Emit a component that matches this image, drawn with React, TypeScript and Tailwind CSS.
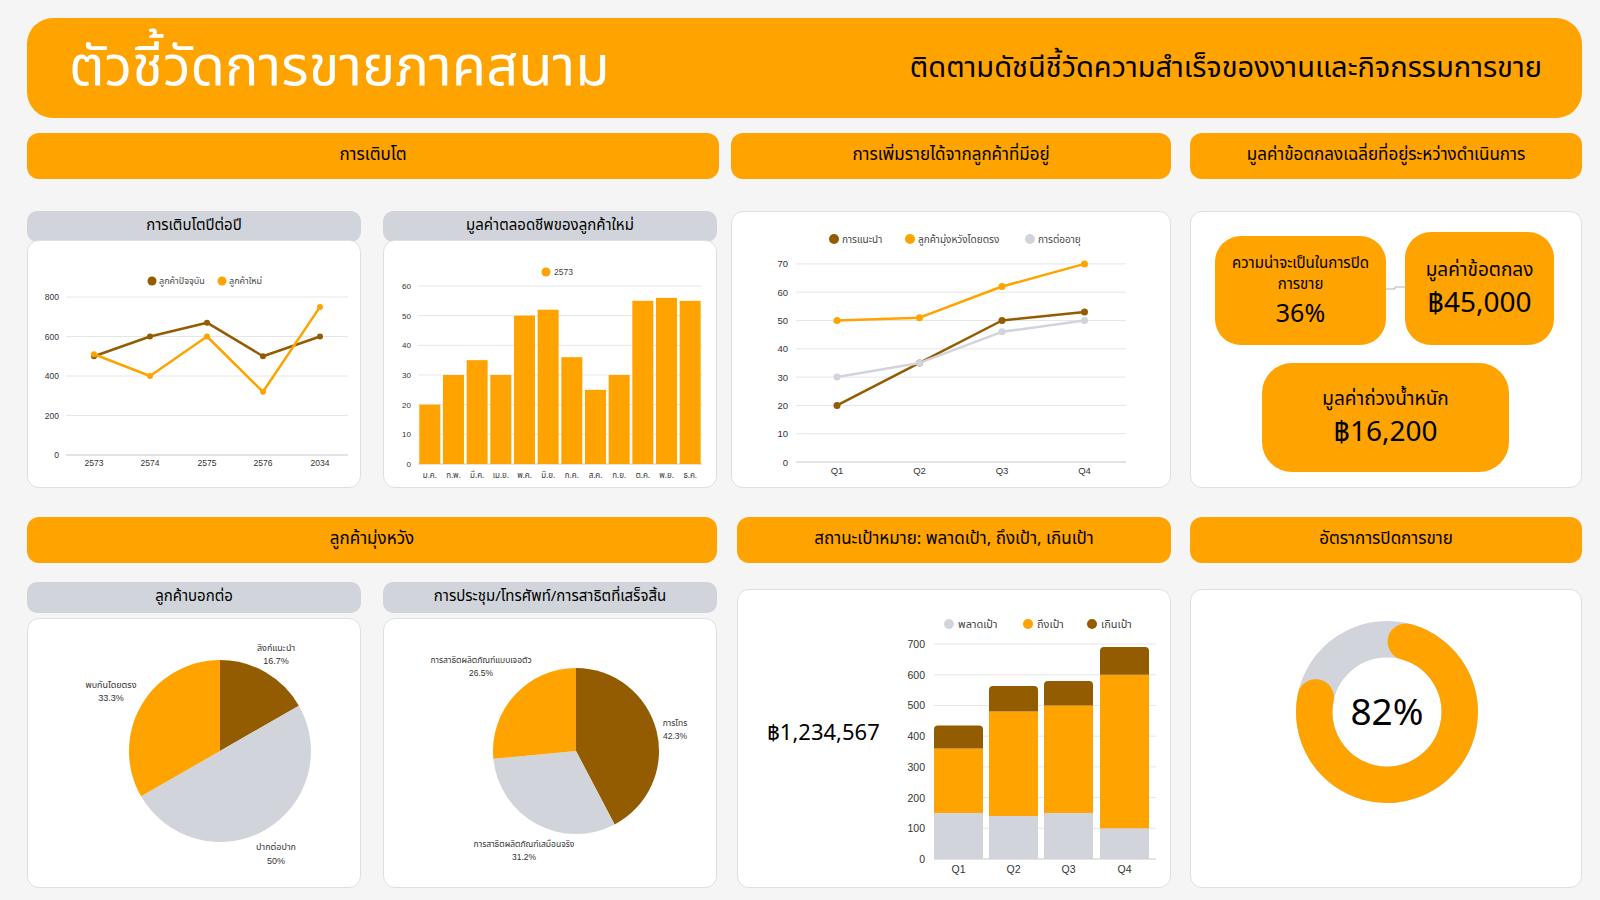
import React from "react";

const OR = "#ffa300";
const BR = "#935c00";
const GR = "#d1d5db";
const GRID = "#e6e6e6";
const AXIS = "#c8c8c8";
const LBL = "#333333";

function SectionHeader({ className, children }: { className: string; children: React.ReactNode }) {
  return (
    <div className={`h-[46px] rounded-[12px] bg-[#ffa300] flex items-center justify-center text-[17px] text-black ${className}`}>
      {children}
    </div>
  );
}

function Card({ className, children }: { className: string; children?: React.ReactNode }) {
  return (
    <div className={`bg-white border border-[#dcdfe6] rounded-[12px] overflow-hidden ${className}`}>{children}</div>
  );
}

function Tab({ children }: { children: React.ReactNode }) {
  return (
    <div className="h-[31px] rounded-[10px] bg-[#d1d5db] flex items-center justify-center text-[15px] text-black">
      {children}
    </div>
  );
}

function pieSlice(cx: number, cy: number, r: number, f0: number, f1: number) {
  const a0 = f0 * 2 * Math.PI - Math.PI / 2;
  const a1 = f1 * 2 * Math.PI - Math.PI / 2;
  const x0 = cx + r * Math.cos(a0);
  const y0 = cy + r * Math.sin(a0);
  const x1 = cx + r * Math.cos(a1);
  const y1 = cy + r * Math.sin(a1);
  const large = f1 - f0 > 0.5 ? 1 : 0;
  return `M${cx},${cy} L${x0},${y0} A${r},${r} 0 ${large} 1 ${x1},${y1} Z`;
}

function topRounded(x: number, y: number, w: number, h: number, r: number) {
  return `M${x},${y + h} V${y + r} Q${x},${y} ${x + r},${y} H${x + w - r} Q${x + w},${y} ${x + w},${y + r} V${y + h} Z`;
}

function GrowthChart() {
  const W = 334;
  const H = 248;
  const x0 = 38;
  const x1 = 320;
  const yb = 214;
  const sc = 158 / 800;
  const xs = [66, 122, 179, 235, 292];
  const cats = ["2573", "2574", "2575", "2576", "2034"];
  const cur = [500, 600, 670, 500, 600];
  const nw = [510, 400, 600, 320, 750];
  const y = (v: number) => yb - v * sc;
  const pts = (d: number[]) => d.map((v, i) => `${xs[i]},${y(v)}`).join(" ");
  return (
    <svg width={W} height={H} className="block">
      {[0, 200, 400, 600, 800].map((t) => (
        <g key={t}>
          <line x1={x0} x2={x1} y1={y(t)} y2={y(t)} stroke={t === 0 ? AXIS : GRID} strokeWidth={1} />
          <text x={31} y={y(t) + 3} textAnchor="end" fontSize={8.5} fill={LBL} fontFamily="Liberation Sans, sans-serif">{t}</text>
        </g>
      ))}
      {cats.map((c, i) => (
        <text key={c} x={xs[i]} y={225} textAnchor="middle" fontSize={8.5} fill={LBL} fontFamily="Liberation Sans, sans-serif">{c}</text>
      ))}
      <circle cx={124} cy={40} r={4.5} fill={BR} />
      <text x={131} y={43} fontSize={9} fill="#444">ลูกค้าปัจจุบัน</text>
      <circle cx={194} cy={40} r={4.5} fill={OR} />
      <text x={201} y={43} fontSize={9} fill="#444">ลูกค้าใหม่</text>
      <polyline points={pts(cur)} fill="none" stroke={BR} strokeWidth={2.5} strokeLinejoin="round" />
      {cur.map((v, i) => <circle key={i} cx={xs[i]} cy={y(v)} r={3} fill={BR} />)}
      <polyline points={pts(nw)} fill="none" stroke={OR} strokeWidth={2.5} strokeLinejoin="round" />
      {nw.map((v, i) => <circle key={i} cx={xs[i]} cy={y(v)} r={3} fill={OR} />)}
    </svg>
  );
}

function LtvChart() {
  const W = 334;
  const H = 248;
  const x0 = 34;
  const cw = 23.67;
  const yb = 223;
  const sc = 2.967;
  const y = (v: number) => yb - v * sc;
  const vals = [20, 30, 35, 30, 50, 52, 36, 25, 30, 55, 56, 55];
  const months = ["ม.ค.", "ก.พ.", "มี.ค.", "เม.ย.", "พ.ค.", "มิ.ย.", "ก.ค.", "ส.ค.", "ก.ย.", "ต.ค.", "พ.ย.", "ธ.ค."];
  return (
    <svg width={W} height={H} className="block">
      {[0, 10, 20, 30, 40, 50, 60].map((t) => (
        <g key={t}>
          <line x1={x0} x2={x0 + cw * 12} y1={y(t)} y2={y(t)} stroke={t === 0 ? AXIS : GRID} strokeWidth={1} />
          <text x={27} y={y(t) + 3} textAnchor="end" fontSize={8} fill={LBL} fontFamily="Liberation Sans, sans-serif">{t}</text>
        </g>
      ))}
      {vals.map((v, i) => (
        <rect key={i} x={x0 + i * cw + 1.3} y={y(v)} width={21} height={v * sc} fill={OR} />
      ))}
      {months.map((m, i) => (
        <text key={m} x={x0 + i * cw + cw / 2} y={237} textAnchor="middle" fontSize={8} fill={LBL}>{m}</text>
      ))}
      <circle cx={162} cy={31} r={4.5} fill={OR} />
      <text x={170} y={34} fontSize={8.5} fill="#444" fontFamily="Liberation Sans, sans-serif">2573</text>
    </svg>
  );
}

function RevenueChart() {
  const W = 440;
  const H = 277;
  const x0 = 64;
  const x1 = 394;
  const yb = 250;
  const sc = 2.83;
  const y = (v: number) => yb - v * sc;
  const xs = [105, 187.5, 270, 352.5];
  const ref = [20, 35, 50, 53];
  const dir = [50, 51, 62, 70];
  const ren = [30, 35, 46, 50];
  const pts = (d: number[]) => d.map((v, i) => `${xs[i]},${y(v)}`).join(" ");
  const series: [number[], string][] = [
    [ref, BR],
    [dir, OR],
    [ren, GR],
  ];
  return (
    <svg width={W} height={H} className="block">
      {[0, 10, 20, 30, 40, 50, 60, 70].map((t) => (
        <g key={t}>
          <line x1={x0} x2={x1} y1={y(t)} y2={y(t)} stroke={t === 0 ? AXIS : GRID} strokeWidth={1} />
          <text x={56} y={y(t) + 3.5} textAnchor="end" fontSize={9.5} fill={LBL} fontFamily="Liberation Sans, sans-serif">{t}</text>
        </g>
      ))}
      {["Q1", "Q2", "Q3", "Q4"].map((q, i) => (
        <text key={q} x={xs[i]} y={262} textAnchor="middle" fontSize={9.5} fill={LBL} fontFamily="Liberation Sans, sans-serif">{q}</text>
      ))}
      <circle cx={102} cy={27} r={5} fill={BR} />
      <text x={110} y={31} fontSize={10} fill="#444">การแนะนำ</text>
      <circle cx={178} cy={27} r={5} fill={OR} />
      <text x={186} y={31} fontSize={10} fill="#444">ลูกค้ามุ่งหวังโดยตรง</text>
      <circle cx={298} cy={27} r={5} fill={GR} />
      <text x={306} y={31} fontSize={10} fill="#444">การต่ออายุ</text>
      {series.map(([d, c], k) => (
        <g key={k}>
          <polyline points={pts(d)} fill="none" stroke={c} strokeWidth={2.5} strokeLinejoin="round" />
          {d.map((v, i) => <circle key={i} cx={xs[i]} cy={y(v)} r={3.5} fill={c} />)}
        </g>
      ))}
    </svg>
  );
}

function DealValue() {
  return (
    <div className="pt-[20px] pl-[24px]">
      <div className="flex items-end">
        <div className="w-[171px] h-[109px] rounded-[26px] bg-[#ffa300] flex flex-col items-center justify-center text-center">
          <div className="text-[15px] leading-[21px]">
            ความน่าจะเป็นในการปิด
            <br />
            การขาย
          </div>
          <div className="text-[25px] leading-[30px] mt-[4px]">36%</div>
        </div>
        <svg width={19} height={113} className="block shrink-0">
          <path d="M0,57 H9 V55 H19" fill="none" stroke="#aeb3ba" strokeWidth={1} />
        </svg>
        <div className="w-[149px] h-[113px] rounded-[26px] bg-[#ffa300] flex flex-col items-center justify-center text-center">
          <div className="text-[19px] leading-[27px]">มูลค่าข้อตกลง</div>
          <div className="text-[28px] leading-[32px] mt-[4px]">฿45,000</div>
        </div>
      </div>
      <div className="mt-[18px] ml-[47px] w-[247px] h-[109px] rounded-[30px] bg-[#ffa300] flex flex-col items-center justify-center text-center">
        <div className="text-[19px] leading-[27px]">มูลค่าถ่วงน้ำหนัก</div>
        <div className="text-[28px] leading-[32px] mt-[4px]">฿16,200</div>
      </div>
    </div>
  );
}

function ReferralPie() {
  const cx = 192;
  const cy = 132;
  const r = 91;
  return (
    <svg width={334} height={270} className="block">
      <path d={pieSlice(cx, cy, r, 0, 0.167)} fill={BR} />
      <path d={pieSlice(cx, cy, r, 0.167, 0.667)} fill={GR} />
      <path d={pieSlice(cx, cy, r, 0.667, 1)} fill={OR} />
      <text x={248} y={32} textAnchor="middle" fontSize={9} fill={LBL}>ลิงก์แนะนำ</text>
      <text x={248} y={45} textAnchor="middle" fontSize={9} fill={LBL} fontFamily="Liberation Sans, sans-serif">16.7%</text>
      <text x={83} y={69} textAnchor="middle" fontSize={9} fill={LBL}>พบกันโดยตรง</text>
      <text x={83} y={82} textAnchor="middle" fontSize={9} fill={LBL} fontFamily="Liberation Sans, sans-serif">33.3%</text>
      <text x={248} y={231} textAnchor="middle" fontSize={9} fill={LBL}>ปากต่อปาก</text>
      <text x={248} y={245} textAnchor="middle" fontSize={9} fill={LBL} fontFamily="Liberation Sans, sans-serif">50%</text>
    </svg>
  );
}

function MeetingPie() {
  const cx = 192;
  const cy = 132;
  const r = 83;
  return (
    <svg width={334} height={270} className="block">
      <path d={pieSlice(cx, cy, r, 0, 0.423)} fill={BR} />
      <path d={pieSlice(cx, cy, r, 0.423, 0.735)} fill={GR} />
      <path d={pieSlice(cx, cy, r, 0.735, 1)} fill={OR} />
      <text x={291} y={107} textAnchor="middle" fontSize={8.5} fill={LBL}>การโทร</text>
      <text x={291} y={120} textAnchor="middle" fontSize={8.5} fill={LBL} fontFamily="Liberation Sans, sans-serif">42.3%</text>
      <text x={97} y={44} textAnchor="middle" fontSize={8.5} fill={LBL}>การสาธิตผลิตภัณฑ์แบบเจอตัว</text>
      <text x={97} y={57} textAnchor="middle" fontSize={8.5} fill={LBL} fontFamily="Liberation Sans, sans-serif">26.5%</text>
      <text x={140} y={228} textAnchor="middle" fontSize={8.5} fill={LBL}>การสาธิตผลิตภัณฑ์เสมือนจริง</text>
      <text x={140} y={241} textAnchor="middle" fontSize={8.5} fill={LBL} fontFamily="Liberation Sans, sans-serif">31.2%</text>
    </svg>
  );
}

function TargetChart() {
  const W = 284;
  const H = 299;
  const x0 = 46;
  const x1 = 268;
  const yb = 269;
  const sc = 0.3071;
  const y = (v: number) => yb - v * sc;
  const bx = [46, 101, 156, 212];
  const bw = 49;
  const data = [
    [150, 360, 435],
    [140, 480, 563],
    [150, 500, 580],
    [100, 600, 690],
  ];
  return (
    <svg width={W} height={H} className="block">
      {[0, 100, 200, 300, 400, 500, 600, 700].map((t) => (
        <g key={t}>
          <line x1={x0} x2={x1} y1={y(t)} y2={y(t)} stroke={t === 0 ? AXIS : GRID} strokeWidth={1} />
          <text x={37} y={y(t) + 4} textAnchor="end" fontSize={10.5} fill={LBL} fontFamily="Liberation Sans, sans-serif">{t}</text>
        </g>
      ))}
      {data.map(([a, b, c], i) => (
        <g key={i}>
          <rect x={bx[i]} y={y(a)} width={bw} height={a * sc} fill={GR} />
          <rect x={bx[i]} y={y(b)} width={bw} height={(b - a) * sc} fill={OR} />
          <path d={topRounded(bx[i], y(c), bw, (c - b) * sc, 4)} fill={BR} />
        </g>
      ))}
      {["Q1", "Q2", "Q3", "Q4"].map((q, i) => (
        <text key={q} x={bx[i] + bw / 2} y={283} textAnchor="middle" fontSize={10.5} fill={LBL} fontFamily="Liberation Sans, sans-serif">{q}</text>
      ))}
      <circle cx={61} cy={34} r={5} fill={GR} />
      <text x={70} y={38} fontSize={11} fill="#444">พลาดเป้า</text>
      <circle cx={140} cy={34} r={5} fill={OR} />
      <text x={149} y={38} fontSize={11} fill="#444">ถึงเป้า</text>
      <circle cx={204} cy={34} r={5} fill={BR} />
      <text x={213} y={38} fontSize={11} fill="#444">เกินเป้า</text>
    </svg>
  );
}

function Donut() {
  const cx = 196;
  const cy = 122;
  const r = 72.75;
  const C = 2 * Math.PI * r;
  const dash = (266 / 360) * C;
  return (
    <svg width={392} height={299} className="block">
      <circle cx={cx} cy={cy} r={r} fill="none" stroke={GR} strokeWidth={36.5} />
      <circle
        cx={cx}
        cy={cy}
        r={r}
        fill="none"
        stroke={OR}
        strokeWidth={36.5}
        strokeLinecap="round"
        strokeDasharray={`${dash} ${C}`}
        transform={`rotate(-75 ${cx} ${cy})`}
      />
      <text x={cx} y={cy + 13} textAnchor="middle" fontSize={37} fill="#000">82%</text>
    </svg>
  );
}

export default function App() {
  return (
    <div className="w-[1600px] h-[900px] overflow-hidden bg-[#f5f5f5] pt-[18px] pl-[27px] font-['Noto_Sans_Thai','Liberation_Sans',sans-serif] text-black">
      <header className="w-[1555px] h-[100px] rounded-[26px] bg-[#ffa300] flex items-center justify-between pl-[42px] pr-[40px]">
        <h1 className="text-white text-[56px] leading-none font-normal">ตัวชี้วัดการขายภาคสนาม</h1>
        <p className="text-[29px] leading-none">ติดตามดัชนีชี้วัดความสำเร็จของงานและกิจกรรมการขาย</p>
      </header>

      <div className="mt-[15px] flex h-[46px]">
        <SectionHeader className="w-[692px]">การเติบโต</SectionHeader>
        <SectionHeader className="ml-[12px] w-[440px]">การเพิ่มรายได้จากลูกค้าที่มีอยู่</SectionHeader>
        <SectionHeader className="ml-[19px] w-[392px]">มูลค่าข้อตกลงเฉลี่ยที่อยู่ระหว่างดำเนินการ</SectionHeader>
      </div>

      <div className="mt-[32px] flex h-[277px]">
        <div className="w-[692px] flex gap-[22px]">
          <div className="w-[334px] flex flex-col">
            <Tab>การเติบโตปีต่อปี</Tab>
            <Card className="-mt-[2px] h-[248px]">
              <GrowthChart />
            </Card>
          </div>
          <div className="w-[334px] flex flex-col">
            <Tab>มูลค่าตลอดชีพของลูกค้าใหม่</Tab>
            <Card className="-mt-[2px] h-[248px]">
              <LtvChart />
            </Card>
          </div>
        </div>
        <Card className="ml-[12px] w-[440px] h-[277px]">
          <RevenueChart />
        </Card>
        <Card className="ml-[19px] w-[392px] h-[277px]">
          <DealValue />
        </Card>
      </div>

      <div className="mt-[29px] flex h-[46px]">
        <SectionHeader className="w-[690px]">ลูกค้ามุ่งหวัง</SectionHeader>
        <SectionHeader className="ml-[20px] w-[434px]">สถานะเป้าหมาย: พลาดเป้า, ถึงเป้า, เกินเป้า</SectionHeader>
        <SectionHeader className="ml-[19px] w-[392px]">อัตราการปิดการขาย</SectionHeader>
      </div>

      <div className="mt-[19px] flex h-[306px]">
        <div className="w-[690px] flex gap-[22px]">
          <div className="w-[334px] flex flex-col">
            <Tab>ลูกค้าบอกต่อ</Tab>
            <Card className="mt-[5px] h-[270px]">
              <ReferralPie />
            </Card>
          </div>
          <div className="w-[334px] flex flex-col">
            <Tab>การประชุม/โทรศัพท์/การสาธิตที่เสร็จสิ้น</Tab>
            <Card className="mt-[5px] h-[270px]">
              <MeetingPie />
            </Card>
          </div>
        </div>
        <Card className="ml-[20px] mt-[7px] w-[434px] h-[299px] flex items-stretch">
          <div className="w-[150px] shrink-0 flex items-center pl-[29px] pb-[10px] text-[22px] leading-none">฿1,234,567</div>
          <TargetChart />
        </Card>
        <Card className="ml-[19px] mt-[7px] w-[392px] h-[299px]">
          <Donut />
        </Card>
      </div>
    </div>
  );
}
